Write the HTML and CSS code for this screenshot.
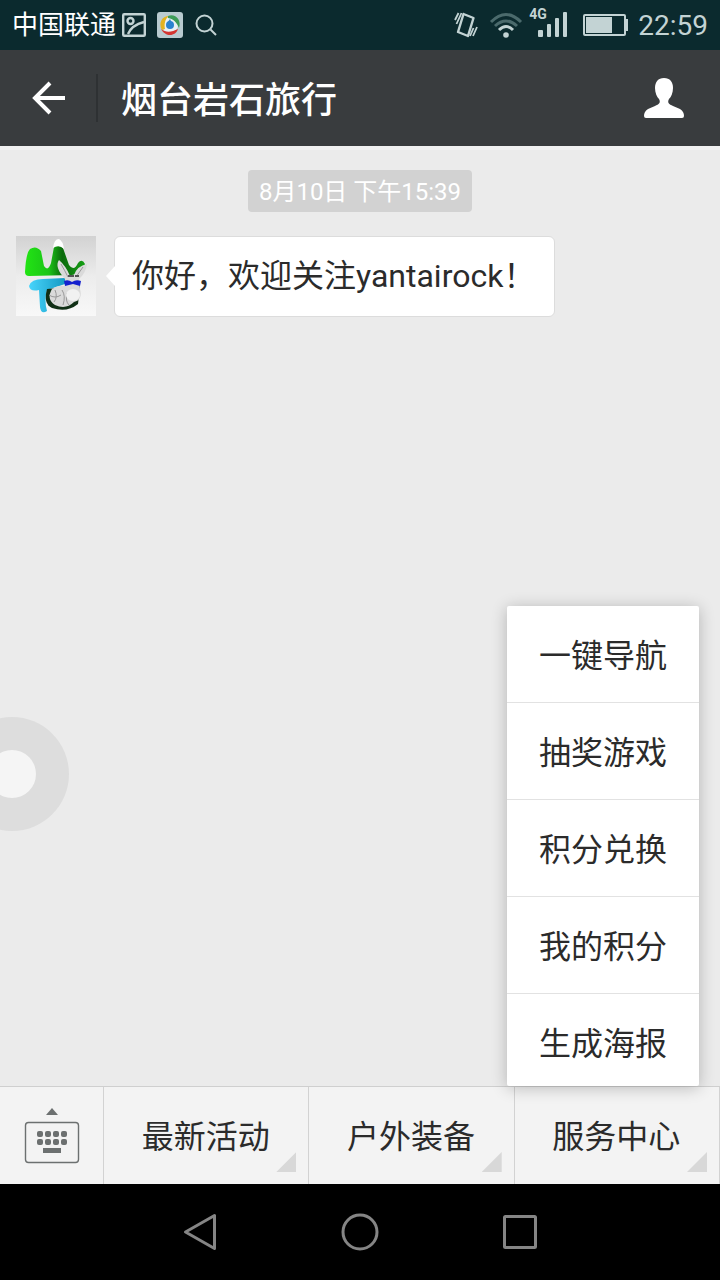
FILE: index.html
```html
<!DOCTYPE html>
<html lang="zh-CN">
<head>
<meta charset="utf-8">
<meta name="viewport" content="width=device-width, initial-scale=1">
<title>烟台岩石旅行</title>
<link rel="stylesheet" href="styles.css">
</head>
<body>
<div class="screen">
  <div class="status">
    <span class="carrier">中国联通</span>
    <svg class="status-picture" width="24" height="24" viewBox="0 0 24 24" fill="none" stroke="#c3d3d4" stroke-width="2.4" aria-hidden="true">
      <rect x="1.2" y="1.2" width="21.6" height="21.6" rx="1"/>
      <circle cx="8.500" cy="8" r="3"/>
      <path d="M6 21C9 14 14 11 22 9"/>
    </svg>
    <svg class="status-app" width="26" height="26" viewBox="0 0 26 26" fill="none" aria-hidden="true">
      <rect width="26" height="26" rx="3" fill="#b9cbd0"/>
      <circle cx="13" cy="13" r="8" fill="#e9f1f3"/>
      <path d="M5 18C1 11 5 4 12 4C8 7 7 12 8 17Z" fill="#e3b321"/>
      <path d="M11 4C18 1 25 8 22 16C20 11 17 7 11 6Z" fill="#3c9b57"/>
      <path d="M4 17C9 21 15 20 21 17C19 24 9 26 4 17Z" fill="#d43530"/>
      <circle cx="13" cy="13" r="4" fill="#2b83cf"/>
      <path d="M13 7L15 11H10Z" fill="#2b83cf"/>
    </svg>
    <svg class="status-search" width="22" height="22" viewBox="0 0 22 22" fill="none" stroke="#c3d3d4" stroke-width="2" aria-hidden="true">
      <circle cx="9.500" cy="9.500" r="8"/>
      <path d="M15.500 15.500L21 21"/>
    </svg>
    <div class="status-right">
      <svg width="24" height="28" viewBox="0 0 24 28" fill="none" stroke="#c3d3d4" stroke-width="2.400" aria-hidden="true">
        <path d="M9.500 3L19.500 7L14 25L4 21Z" stroke-linejoin="round"/>
        <path d="M4.500 2L1 9M7.500 2L2.500 13M23 16L19 25M19.500 17L16 25" stroke-width="1.800"/>
      </svg>
      <svg class="wifi" width="34" height="28" viewBox="0 0 34 28" fill="none" stroke-width="3" aria-hidden="true">
        <path d="M2 11Q17 -4 32 11M6 15Q17 5 28 15" stroke="#4b6a6c"/>
        <path d="M10 19Q17 12 24 19" stroke="#c3d3d4"/>
        <circle cx="17" cy="24" r="2.800" fill="#c3d3d4"/>
      </svg>
      <span class="signal">
        <span class="network">4G</span>
        <svg width="30" height="26" viewBox="0 0 30 26" fill="#c3d3d4" aria-hidden="true">
          <rect x="0" y="18" width="5" height="7" rx="1"/><rect x="9" y="12" width="4" height="13" rx="1"/><rect x="17" y="6" width="4" height="19" rx="1"/><rect x="25" y="0" width="4" height="25" rx="1"/>
        </svg>
      </span>
      <svg class="battery" width="46" height="24" viewBox="0 0 46 24" aria-hidden="true">
        <rect x="1" y="2" width="41" height="20" rx="1" fill="none" stroke="#c3d3d4" stroke-width="2"/>
        <rect x="3" y="4" width="26" height="16" fill="#c3d3d4"/>
        <rect x="43" y="6" width="2" height="12" fill="#c3d3d4"/>
      </svg>
      <time class="clock">22:59</time>
    </div>
  </div>

  <header class="header">
    <button class="back" type="button" aria-label="返回">
      <svg width="34" height="34" viewBox="0 0 34 34" fill="none" stroke="#fff" stroke-width="4" aria-hidden="true">
        <path d="M33 17H3M18 2L3 17L18 32"/>
      </svg>
    </button>
    <h1 class="title">烟台岩石旅行</h1>
    <button class="profile" type="button" aria-label="公众号资料">
      <svg width="42" height="42" viewBox="0 0 42 42" fill="#fff" aria-hidden="true">
        <path d="M21 1C15 1 12 5 12 11C12 16 14 20 16 22C18 26 16 27 12 29L5 32C2 34 1 36 1 39Q1 41 3 41H39Q41 41 41 39C41 36 40 34 37 32L30 29C26 27 24 26 26 22C28 20 30 16 30 11C30 5 27 1 21 1Z"/>
      </svg>
    </button>
  </header>

  <main class="chat">
    <time class="stamp">8月10日 下午15:39</time>
    <div class="message">
      <svg class="avatar" width="80" height="80" viewBox="0 0 80 80" role="img" aria-label="烟台岩石旅行">
        <defs>
          <linearGradient id="paper" x2="0" y2="1"><stop offset="0" stop-color="#d2d2d2"/><stop offset=".5" stop-color="#ececec"/><stop offset="1" stop-color="#f8f8f8"/></linearGradient>
          <linearGradient id="grass" x2="1" y2="0"><stop offset="0" stop-color="#22e414"/><stop offset=".4" stop-color="#1bc417"/><stop offset=".62" stop-color="#0b6a0c"/><stop offset="1" stop-color="#16a015"/></linearGradient>
          <linearGradient id="water"><stop offset="0" stop-color="#48d4fb"/><stop offset="1" stop-color="#159ac4"/></linearGradient>
        </defs>
        <rect width="80" height="80" fill="url(#paper)"/>
        <path d="M9 36Q10 17 14 13Q20 9 25 15L28 30Q32 36 35 27L38 11Q42 2 47 12L53 29Q58 36 62 27Q66 22 69 28Q66 38 56 39L13 40Q9 40 9 36Z" fill="url(#grass)"/>
        <path d="M37 12Q38 3 43 3Q47 5 48 13Q43 8 37 12Z" fill="#fff"/>
        <path d="M13 50Q15 43 27 43L49 42V48L31 54Q28 64 31 75Q25 79 24 71L23 54Q14 56 13 50Z" fill="url(#water)"/>
        <path d="M31 53Q27 68 36 72Q51 77 62 68L64 50Z" fill="#102f15"/>
        <path d="M49 43Q38 31 43 24Q50 30 54 40L58 39Q61 30 71 28Q70 37 63 43L64 53Q67 64 58 66Q50 74 39 69Q30 63 36 53Q42 49 49 50Z" fill="#dadada"/>
        <path d="M45 28Q49 35 52 41M67 31L60 41M39 54Q42 61 38 66M46 54Q50 60 47 69M33 59Q39 63 45 59M51 57Q49 65 53 69" fill="none" stroke="#999" stroke-width="1"/>
        <ellipse cx="57" cy="59" rx="7" ry="6" fill="#f1f1f1"/>
        <path d="M52 40H58M59 40H63" stroke="#555" stroke-width="2"/>
        <path d="M48 45Q52 43 56 46Q60 43 65 45L64 50L57 48L49 50Z" fill="#1420ce"/>
      </svg>
      <p class="bubble">你好，欢迎关注yantairock！</p>
    </div>
    <button class="assist" type="button" aria-label="悬浮按钮"><span class="assist-dot"></span></button>
  </main>

  <nav class="tabs" aria-label="公众号菜单">
    <button class="keyboard" type="button" aria-label="切换到键盘">
      <svg width="56" height="58" viewBox="0 0 56 58" fill="#6c7070" aria-hidden="true">
        <path d="M22 8L28 1L34 8Z"/>
        <rect x="1.500" y="15.500" width="53" height="40" rx="3" fill="none" stroke="#6c7070" stroke-width="1.400"/>
        <rect x="13" y="24" width="6" height="6" rx="2"/><rect x="21" y="24" width="6" height="6" rx="2"/><rect x="29" y="24" width="6" height="6" rx="2"/><rect x="37" y="24" width="6" height="6" rx="2"/>
        <rect x="13" y="32" width="6" height="6" rx="2"/><rect x="21" y="32" width="6" height="6" rx="2"/><rect x="29" y="32" width="6" height="6" rx="2"/><rect x="37" y="32" width="6" height="6" rx="2"/>
        <rect x="19" y="41" width="18" height="5"/>
      </svg>
    </button>
    <div class="tab"><button class="tab-button" type="button">最新活动</button></div>
    <div class="tab"><button class="tab-button" type="button">户外装备</button></div>
    <div class="tab tab-last">
      <button class="tab-button" type="button" aria-expanded="true" aria-controls="service-menu">服务中心</button>
      <div class="menu" id="service-menu">
        <button class="menu-item" type="button">一键导航</button>
        <button class="menu-item" type="button">抽奖游戏</button>
        <button class="menu-item" type="button">积分兑换</button>
        <button class="menu-item" type="button">我的积分</button>
        <button class="menu-item" type="button">生成海报</button>
      </div>
    </div>
  </nav>

  <div class="system">
    <button class="system-button" type="button" aria-label="后退">
      <svg width="40" height="40" viewBox="0 0 40 40" fill="none" stroke="#858585" stroke-width="3" stroke-linejoin="round" aria-hidden="true"><path d="M34.500 3.500V36.500L5.500 20Z"/></svg>
    </button>
    <button class="system-button" type="button" aria-label="主屏幕">
      <svg width="40" height="40" viewBox="0 0 40 40" fill="none" stroke="#858585" stroke-width="3" aria-hidden="true"><circle cx="20" cy="20" r="17"/></svg>
    </button>
    <button class="system-button" type="button" aria-label="最近任务">
      <svg width="40" height="40" viewBox="0 0 40 40" fill="none" stroke="#858585" stroke-width="3" aria-hidden="true"><rect x="4.500" y="4.500" width="31" height="31" rx="1"/></svg>
    </button>
  </div>
</div>
</body>
</html>
```
FILE: styles.css
```css
* {
  box-sizing: border-box;
}

body {
  margin: 0;
  font-family: Roboto, "Noto Sans CJK SC", sans-serif;
  color: #2b2b2b;
}

button {
  margin: 0;
  padding: 0;
  border: 0;
  background: none;
  color: inherit;
  font: inherit;
}

svg {
  display: block;
  flex: none;
}

.screen {
  display: flex;
  flex-direction: column;
  min-height: 100vh;
  background: #ebebeb;
}

.status {
  display: flex;
  align-items: center;
  height: 50px;
  padding: 0 12px;
  background: #0b2a2e;
}

.carrier {
  margin-right: 6px;
  color: #fff;
  font-size: 26px;
  line-height: 50px;
}

.status-app {
  margin: 0 12px 0 11px;
}

.status-right {
  display: flex;
  align-items: center;
  margin-left: auto;
}

.wifi {
  margin: 0 6px 0 11px;
}

.signal {
  position: relative;
  padding-left: 9px;
}

.network {
  position: absolute;
  top: -5px;
  left: 0;
  color: #c3d3d4;
  font-size: 14px;
  font-weight: 700;
  line-height: 14px;
}

.battery {
  margin: 0 9px 0 15px;
}

.clock {
  padding-top: 2px;
  color: #c3d3d4;
  font-size: 28px;
  line-height: 48px;
}

.header {
  display: flex;
  align-items: center;
  height: 96px;
  background: #393c3e;
  color: #fff;
}

.back {
  display: flex;
  align-items: center;
  width: 98px;
  height: 48px;
  padding-left: 32px;
  border-right: 2px solid #2e3133;
}

.title {
  flex: 1;
  margin: 0;
  padding: 6px 0 0 23px;
  font-size: 36px;
  font-weight: 500;
  line-height: 52px;
}

.profile {
  padding: 0 35px;
}

.chat {
  position: relative;
  display: flex;
  flex: 1;
  flex-direction: column;
  padding: 20px 16px;
  border-top: 4px solid #f1f1f1;
}

.stamp {
  align-self: center;
  padding: 3px 11px 0;
  border-radius: 4px;
  background: #d2d2d2;
  color: #fff;
  font-size: 24px;
  line-height: 39px;
}

.message {
  display: flex;
  align-items: flex-start;
  gap: 18px;
  margin-top: 24px;
}

.bubble {
  position: relative;
  margin: 0;
  padding: 15px 19px 15px 17px;
  border: 1px solid #dcdcdc;
  border-radius: 6px;
  background: #fff;
  font-size: 32px;
  line-height: 49px;
}

.bubble::before {
  content: "";
  position: absolute;
  top: 29px;
  left: -9px;
  width: 9px;
  height: 20px;
  background: #fff;
  clip-path: polygon(0 50%, 100% 0, 100% 100%);
}

.assist {
  position: absolute;
  bottom: 255px;
  left: -45px;
  display: flex;
  align-items: center;
  justify-content: center;
  width: 114px;
  height: 114px;
  border-radius: 50%;
  background: #dddddd;
}

.assist-dot {
  width: 48px;
  height: 48px;
  border-radius: 50%;
  background: #f5f5f5;
}

.tabs {
  display: flex;
  height: 98px;
  border-top: 1px solid #cfcfcf;
  background: #f3f3f3;
}

.keyboard {
  display: flex;
  align-items: center;
  justify-content: center;
  width: 103px;
}

.tab {
  position: relative;
  flex: 1;
  border-left: 1px solid #d2d2d2;
}

.tab-last {
  border-right: 1px solid #d2d2d2;
}

.tab-button {
  width: 100%;
  height: 100%;
  padding: 2px 1px 0 0;
  font-size: 32px;
  line-height: 48px;
}

.tab::after {
  content: "";
  position: absolute;
  right: 12px;
  bottom: 12px;
  width: 20px;
  height: 20px;
  background: #d8d8d8;
  clip-path: polygon(100% 0, 100% 100%, 0 100%);
}

.menu {
  position: absolute;
  right: 20px;
  bottom: 98px;
  display: flex;
  flex-direction: column;
  width: 192px;
  border-radius: 2px;
  background: #fff;
  box-shadow: 0 2px 16px rgba(0, 0, 0, 0.24);
}

.menu-item {
  padding: 26px 0 22px;
  border-bottom: 1px solid #e2e2e2;
  font-size: 32px;
  line-height: 48px;
}

.menu-item:last-child {
  padding-bottom: 18px;
  border-bottom: 0;
}

.system {
  display: flex;
  align-items: center;
  justify-content: center;
  gap: 120px;
  height: 96px;
  background: #000;
}
```
